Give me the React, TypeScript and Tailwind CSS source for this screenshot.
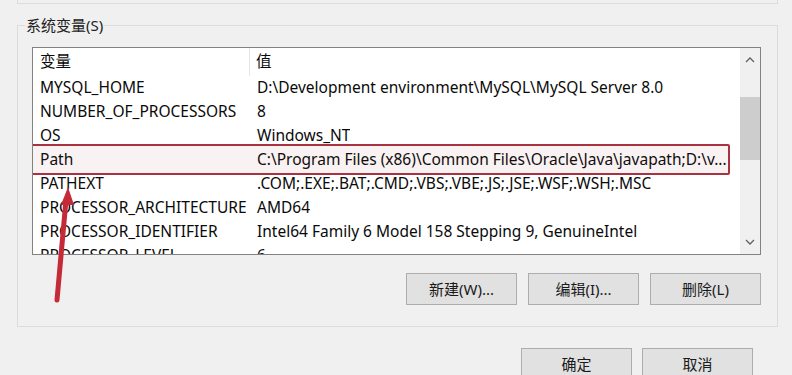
import React from 'react';

const rows: [string, string][] = [
  ['MYSQL_HOME', 'D:\\Development environment\\MySQL\\MySQL Server 8.0'],
  ['NUMBER_OF_PROCESSORS', '8'],
  ['OS', 'Windows_NT'],
  ['Path', 'C:\\Program Files (x86)\\Common Files\\Oracle\\Java\\javapath;D:\\v...'],
  ['PATHEXT', '.COM;.EXE;.BAT;.CMD;.VBS;.VBE;.JS;.JSE;.WSF;.WSH;.MSC'],
  ['PROCESSOR_ARCHITECTURE', 'AMD64'],
  ['PROCESSOR_IDENTIFIER', 'Intel64 Family 6 Model 158 Stepping 9, GenuineIntel'],
  ['PROCESSOR_LEVEL', '6'],
];

const Button: React.FC<{ label: string }> = ({ label }) => (
  <button className="w-[111px] h-[32px] shrink-0 border border-[#adadad] bg-[#e1e1e1] text-[15px] text-[#1a1a1a]">
    {label}
  </button>
);

const Chevron: React.FC<{ down?: boolean }> = ({ down }) => (
  <svg width="10" height="6" viewBox="0 0 10 6" className="text-[#606060]">
    <path
      d={down ? 'M1 1 L5 5 L9 1' : 'M1 5 L5 1 L9 5'}
      fill="none"
      stroke="currentColor"
      strokeWidth="1.3"
    />
  </svg>
);

const App: React.FC = () => {
  return (
    <div className="relative w-[792px] h-[375px] overflow-hidden bg-[#f0f0f0] font-['Noto_Sans','Noto_Sans_CJK_SC',sans-serif] text-[15px] text-[#0a0a0a]">
      {/* bottom of the user-variables group above */}
      <div className="ml-[17px] w-[761px] h-[4px] border-x border-b border-[#dcdcdc]" />

      {/* 系统变量 group */}
      <div className="relative ml-[17px] mt-[21px] w-[761px] h-[302px] border border-[#dcdcdc] pl-[14px] pt-[21px]">
        <span className="absolute left-[7px] -top-[12px] leading-[22px] px-px bg-[#f0f0f0] text-[#222]">
          系统变量(S)
        </span>

        {/* list view */}
        <div className="flex w-[729px] h-[208px] border border-[#828282] bg-white text-[15.5px]">
          <div className="flex-1 min-w-0 overflow-hidden">
            <div className="flex h-[28px] items-center">
              <div className="w-[217px] h-full flex items-center pl-[7px] border-r border-[#e5e5e5]">变量</div>
              <div className="pl-[6px]">值</div>
            </div>
            {rows.map(([name, value]) => (
              <div key={name} className="relative flex h-[24px] items-center whitespace-nowrap">
                {name === 'Path' && (
                  <div className="absolute -left-[5px] -top-[4px] w-[702px] h-[31px] border-2 border-[#a8323f] rounded-[2px] bg-[#a0304010]" />
                )}
                <div className="w-[217px] pl-[7px] shrink-0">{name}</div>
                <div className="pl-[7px] overflow-hidden">{value}</div>
              </div>
            ))}
          </div>

          {/* scrollbar */}
          <div className="w-[20px] flex flex-col bg-[#f0f0f0]">
            <div className="h-[24px] flex items-center justify-center">
              <Chevron />
            </div>
            <div className="flex-1 pt-[25px]">
              <div className="h-[63px] bg-[#cdcdcd]" />
            </div>
            <div className="h-[24px] flex items-center justify-center">
              <Chevron down />
            </div>
          </div>
        </div>

        <div className="mt-[18px] w-[729px] flex justify-end gap-[11px]">
          <Button label="新建(W)..." />
          <Button label="编辑(I)..." />
          <Button label="删除(L)" />
        </div>
      </div>

      {/* dialog buttons */}
      <div className="mt-[21px] flex justify-end gap-[10px] pr-[39px]">
        <Button label="确定" />
        <Button label="取消" />
      </div>

      {/* red annotation arrow */}
      <svg className="absolute inset-0 pointer-events-none" width="792" height="375" viewBox="0 0 792 375">
        <line x1="57" y1="300" x2="66" y2="200" stroke="#c42a38" strokeWidth="5" strokeLinecap="round" />
        <polygon points="68,187 61,205 74,205" fill="#c42a38" />
      </svg>
    </div>
  );
};

export default App;
